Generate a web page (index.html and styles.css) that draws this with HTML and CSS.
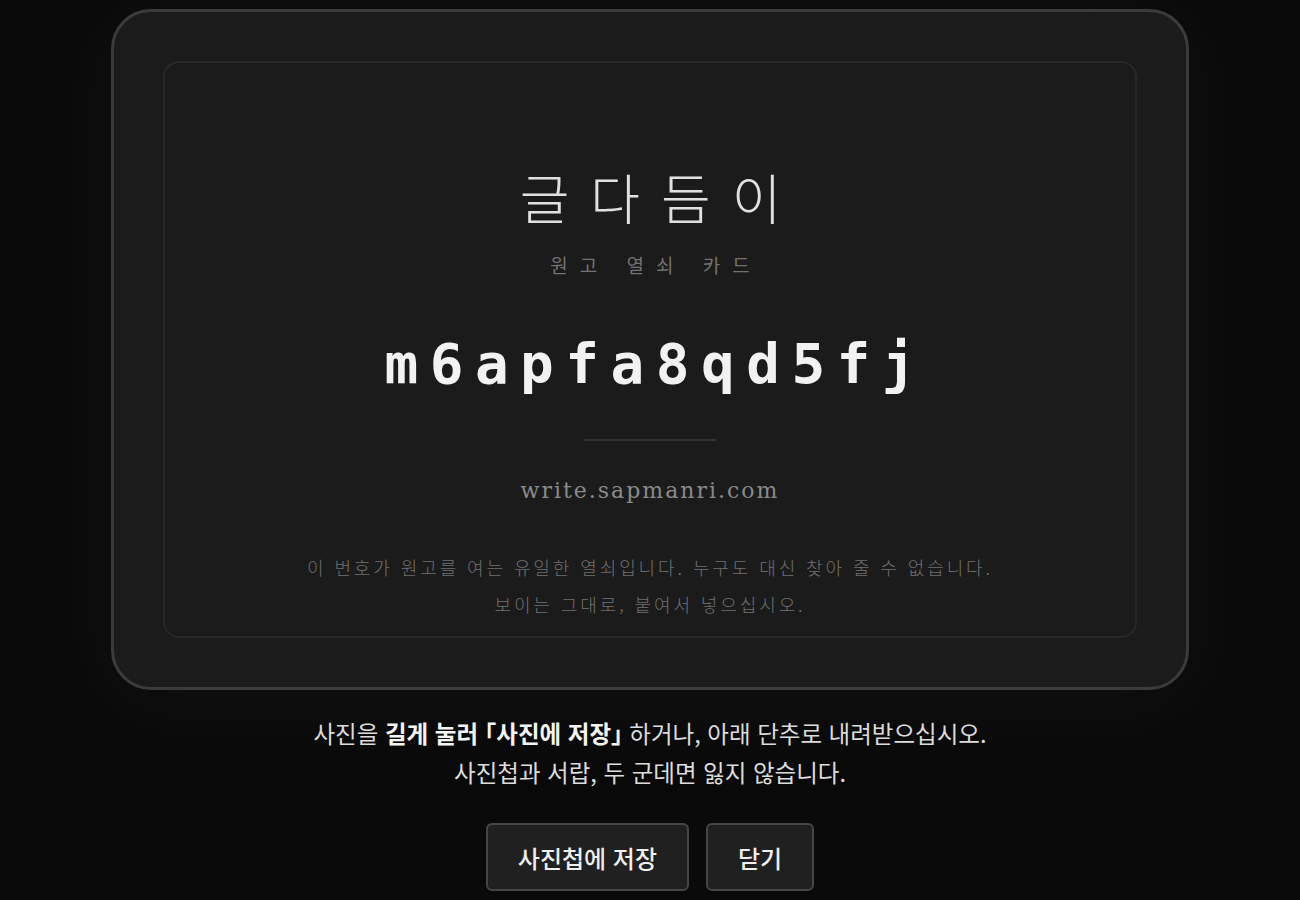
FILE: index.html
```html
<!DOCTYPE html>
<html lang="ko">
<head>
<meta charset="utf-8">
<title>원고 열쇠 카드</title>
<link rel="stylesheet" href="styles.css">
</head>
<body>
<main class="page">
  <section class="card">
    <div class="card-inner">
      <h1 class="brand">글다듬이</h1>
      <p class="subtitle">원고 열쇠 카드</p>
      <p class="code">m6apfa8qd5fj</p>
      <hr class="divider">
      <p class="url">write.sapmanri.com</p>
      <p class="caption">이 번호가 원고를 여는 유일한 열쇠입니다. 누구도 대신 찾아 줄 수 없습니다.<br>보이는 그대로, 붙여서 넣으십시오.</p>
    </div>
  </section>
  <p class="hint">사진을 <strong>길게 눌러 <span class="bracket">「</span>사진에 저장<span class="bracket">」</span></strong> 하거나, 아래 단추로 내려받으십시오.<br>사진첩과 서랍, 두 군데면 잃지 않습니다.</p>
  <div class="actions">
    <button class="btn" type="button">사진첩에 저장</button>
    <button class="btn" type="button">닫기</button>
  </div>
</main>
</body>
</html>
```

FILE: styles.css
```css
* { box-sizing: border-box; }
html, body {
  margin: 0;
  padding: 0;
  background: #0a0a0a;
  height: 100%;
  overflow: hidden;
}
body {
  font-family: "Noto Sans CJK KR", "Noto Sans", sans-serif;
  color: #dedede;
}
.page {
  display: flex;
  flex-direction: column;
  align-items: center;
  padding-top: 9px;
}
.card {
  width: 1078px;
  background: #1b1b1b;
  border: 3px solid #3b3b3b;
  border-radius: 40px;
  padding: 49px;
  box-shadow: 0 10px 90px rgba(40, 40, 40, 0.25);
}
.card-inner {
  border: 2px solid #282828;
  border-radius: 16px;
  padding: 102px 20px 13px;
  display: flex;
  flex-direction: column;
  align-items: center;
  text-align: center;
}
.brand {
  margin: 0 -22px 0 0;
  font-size: 54px;
  line-height: 64px;
  font-weight: 300;
  letter-spacing: 21px;
  color: #e0e0e0;
}
.subtitle {
  margin: 22px -12px 0 0;
  font-size: 19px;
  line-height: 28px;
  font-weight: 400;
  letter-spacing: 12px;
  color: #727272;
}
.code {
  margin: 45px -11.5px 0 0;
  font-family: "DejaVu Sans Mono", monospace;
  font-weight: 700;
  font-size: 56px;
  line-height: 80px;
  letter-spacing: 11.5px;
  color: #f2f2f2;
}
.divider {
  margin: 35px 0 0;
  width: 132px;
  height: 2px;
  border: 0;
  background: #333333;
}
.url {
  margin: 36px 0 0;
  font-family: "DejaVu Serif", "Liberation Serif", serif;
  font-size: 22px;
  line-height: 28px;
  letter-spacing: 2px;
  color: #8a8a8a;
}
.caption {
  margin: 44px 0 0;
  font-size: 18px;
  line-height: 37px;
  font-weight: 300;
  letter-spacing: 2.9px;
  color: #707070;
}
.hint {
  margin: 24px 0 0;
  font-size: 23.5px;
  line-height: 39px;
  text-align: center;
  color: #dcdcdc;
}
.hint strong {
  font-weight: 700;
  color: #f4f4f4;
}
.bracket {
  font-feature-settings: "halt";
}
.actions {
  display: flex;
  gap: 17px;
  margin-top: 31px;
}
.btn {
  height: 68px;
  padding: 0 30px;
  background: #202020;
  border: 2px solid #464646;
  border-radius: 6px;
  font-family: "Noto Sans CJK KR", "Noto Sans", sans-serif;
  font-size: 24px;
  font-weight: 500;
  color: #efefef;
}
```
